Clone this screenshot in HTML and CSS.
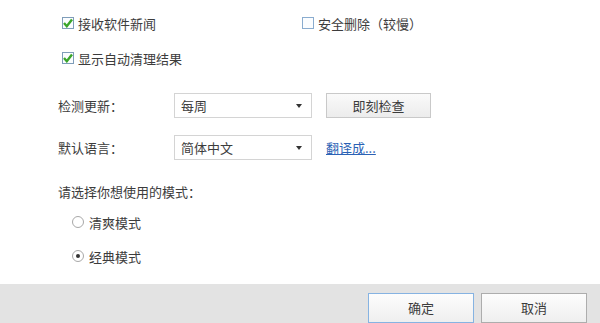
FILE: index.html
```html
<!DOCTYPE html>
<html lang="zh-CN">

<head>
  <meta charset="UTF-8" />
  <title>设置</title>
  <link rel="stylesheet" href="styles.css">
</head>

<body>
  <div class="dlg">
    <div class="panel">
      <!-- 复选项 -->
      <div class="opts">
        <label class="chk on">
          <span class="box"><svg width="10" height="10" viewBox="0 0 10 10"><path d="M1 5 L3.8 8.2 L9 1.4" fill="none" stroke="#3aa52a" stroke-width="2.4" /></svg></span>
          接收软件新闻
        </label>
        <label class="chk">
          <span class="box"></span>
          安全删除（较慢）
        </label>
        <label class="chk on">
          <span class="box"><svg width="10" height="10" viewBox="0 0 10 10"><path d="M1 5 L3.8 8.2 L9 1.4" fill="none" stroke="#3aa52a" stroke-width="2.4" /></svg></span>
          显示自动清理结果
        </label>
      </div>

      <!-- 下拉设置 -->
      <div class="row">
        <span class="lbl">检测更新：</span>
        <div class="sel">每周<span class="arr"></span></div>
        <button class="btn">即刻检查</button>
      </div>
      <div class="row row2">
        <span class="lbl">默认语言：</span>
        <div class="sel">简体中文<span class="arr"></span></div>
        <a class="link" href="#">翻译成...</a>
      </div>

      <!-- 模式 -->
      <p class="tip">请选择你想使用的模式：</p>
      <label class="radio"><span class="dot"></span>清爽模式</label>
      <label class="radio on"><span class="dot"></span>经典模式</label>
    </div>

    <div class="foot">
      <button class="fbtn ok">确定</button>
      <button class="fbtn">取消</button>
    </div>
  </div>
</body>

</html>
```

FILE: styles.css
```css
* {
  margin: 0;
  padding: 0;
  box-sizing: border-box;
}

body {
  width: 600px;
  height: 323px;
  overflow: hidden;
  background: #fff;
  font: 13px "Noto Sans CJK SC", "Microsoft YaHei", sans-serif;
  color: #3c3c3c;
}

.dlg {
  height: 323px;
  display: flex;
  flex-direction: column;
}

.panel {
  height: 289px;
  padding: 11px 0 0 58px;
}

.opts {
  display: grid;
  grid-template-columns: 240px auto;
  row-gap: 11px;
  margin-left: 4px;
}

.chk {
  display: flex;
  align-items: center;
  height: 24px;
  gap: 4px;
}

.chk .box {
  width: 12px;
  height: 12px;
  border: 1px solid #8aaccf;
  background: #fbfdff;
  display: flex;
  align-items: center;
  justify-content: center;
}

.chk.on .box {
  border-color: #7f9db9;
}

.row {
  display: flex;
  align-items: center;
  height: 25px;
  margin-top: 23px;
}

.row2 {
  margin-top: 17px;
}

.lbl {
  width: 116px;
}

.sel {
  position: relative;
  width: 138px;
  height: 25px;
  line-height: 23px;
  border: 1px solid #d4d4d4;
  padding-left: 6px;
  background: #fff;
}

.sel .arr {
  position: absolute;
  right: 9px;
  top: 10px;
  border-left: 3.5px solid transparent;
  border-right: 3.5px solid transparent;
  border-top: 4px solid #333;
}

.btn {
  width: 105px;
  height: 25px;
  margin-left: 14px;
  border: 1px solid #c9c9c9;
  background: linear-gradient(#fafafa, #ececec);
  font: inherit;
  color: #3c3c3c;
}

.link {
  margin-left: 14px;
  color: #2b62b5;
  text-decoration: underline;
}

.tip {
  margin-top: 22px;
  line-height: 20px;
}

.radio {
  display: flex;
  align-items: center;
  gap: 5px;
  height: 20px;
  margin: 10px 0 0 14px;
}

.radio + .radio {
  margin-top: 14px;
}

.radio .dot {
  width: 12px;
  height: 12px;
  border: 1px solid #a8a8a8;
  border-radius: 50%;
  background: #fff;
  display: flex;
  align-items: center;
  justify-content: center;
}

.radio.on .dot::after {
  content: "";
  width: 4px;
  height: 4px;
  border-radius: 50%;
  background: #333;
}

.foot {
  flex: 1;
  background: #e3e3e3;
  display: flex;
  justify-content: flex-end;
  align-items: flex-start;
  gap: 7px;
  padding: 9px 13px 0 0;
}

.fbtn {
  flex: none;
  width: 106px;
  height: 30px;
  border: 1px solid #adadad;
  background: linear-gradient(#fdfdfd, #efefef);
  font: inherit;
  color: #3c3c3c;
  padding-bottom: 1px;
}

.fbtn.ok {
  border-color: #86b3e2;
}
```
